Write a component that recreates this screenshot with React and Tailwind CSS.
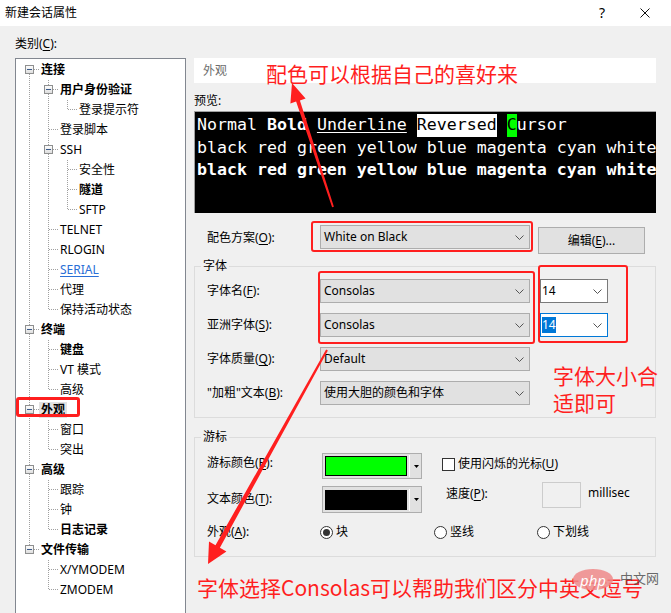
import React from "react";

// Category tree of the session properties dialog
const TREE = [
  {
    label: "连接",
    bold: true,
    children: [
      { label: "用户身份验证", bold: true, children: [{ label: "登录提示符" }] },
      { label: "登录脚本" },
      {
        label: "SSH",
        children: [{ label: "安全性" }, { label: "隧道", bold: true }, { label: "SFTP" }],
      },
      { label: "TELNET" },
      { label: "RLOGIN" },
      { label: "SERIAL", link: true },
      { label: "代理" },
      { label: "保持活动状态" },
    ],
  },
  {
    label: "终端",
    bold: true,
    children: [{ label: "键盘", bold: true }, { label: "VT 模式" }, { label: "高级" }],
  },
  { label: "外观", bold: true, selected: true, children: [{ label: "窗口" }, { label: "突出" }] },
  {
    label: "高级",
    bold: true,
    children: [{ label: "跟踪" }, { label: "钟" }, { label: "日志记录", bold: true }],
  },
  { label: "文件传输", bold: true, children: [{ label: "X/YMODEM" }, { label: "ZMODEM" }] },
];

// flatten the tree into rows, remembering which ancestor lines continue
function flatten(nodes, depth = 0, trail = [], out = []) {
  nodes.forEach((node, i) => {
    const last = i === nodes.length - 1;
    out.push({ ...node, depth, trail, last, first: depth === 0 && i === 0, key: out.length });
    if (node.children) flatten(node.children, depth + 1, [...trail, !last], out);
  });
  return out;
}

const DOT = { stroke: "#a0a0a0", strokeWidth: 1, strokeDasharray: "1 1" };

function Guide({ pass }) {
  return (
    <svg width="19" height="20" className="shrink-0">
      {pass && <line x1="9.5" y1="0" x2="9.5" y2="20" {...DOT} />}
    </svg>
  );
}

function Joint({ first, last, open }) {
  return (
    <svg width="19" height="20" className="shrink-0">
      {!first && <line x1="9.5" y1="0" x2="9.5" y2={open ? 5 : 10} {...DOT} />}
      {!last && <line x1="9.5" y1={open ? 14 : 10} x2="9.5" y2="20" {...DOT} />}
      <line x1={open ? 14 : 10} y1="9.5" x2="19" y2="9.5" {...DOT} />
      {open && (
        <g>
          <defs>
            <linearGradient id="exp" x1="0" y1="0" x2="0" y2="1">
              <stop offset="0" stopColor="#ffffff" />
              <stop offset="1" stopColor="#dcdcdc" />
            </linearGradient>
          </defs>
          <rect x="5.5" y="5.5" width="8" height="8" fill="url(#exp)" stroke="#8e8f8f" />
          <line x1="7" y1="9.5" x2="12" y2="9.5" stroke="#3b5a8a" />
        </g>
      )}
    </svg>
  );
}

function TreeRow({ row }) {
  return (
    <div className="flex h-[20px] items-center">
      {row.trail.map((pass, i) => (
        <Guide key={i} pass={pass} />
      ))}
      <Joint first={row.first} last={row.last} open={!!row.children} />
      <span
        className={`whitespace-nowrap px-[2px] leading-[16px] ${row.bold ? "font-bold" : ""} ${
          row.selected ? "bg-[#e2e2e2]" : ""
        } ${row.link ? "text-[#2a6fd6] underline underline-offset-2" : ""}`}
      >
        {row.label}
      </span>
    </div>
  );
}

function Mn({ children }) {
  return <span className="underline underline-offset-2">{children}</span>;
}

function Chevron() {
  return (
    <svg width="9" height="5" className="shrink-0">
      <path d="M0.5 0.5 L4.5 4.5 L8.5 0.5" fill="none" stroke="#555" />
    </svg>
  );
}

function Combo({ value, className = "" }) {
  return (
    <div
      className={`flex h-[24px] items-center justify-between border border-[#adadad] bg-[#e1e1e1] pl-[3px] pr-[5px] ${className}`}
    >
      <span className="whitespace-nowrap">{value}</span>
      <Chevron />
    </div>
  );
}

function SizeBox({ focused }) {
  return (
    <div
      className={`ml-[10px] flex h-[24px] w-[68px] items-center justify-between border bg-white pl-[1px] pr-[5px] ${
        focused ? "border-[#0078d7]" : "border-[#7a7a7a]"
      }`}
    >
      <span className={focused ? "bg-[#0078d7] text-white" : ""}>14</span>
      <Chevron />
    </div>
  );
}

function ColorButton({ color, className = "" }) {
  return (
    <div
      className={`flex h-[26px] w-[100px] items-center border border-[#adadad] bg-[#e1e1e1] pl-[2px] ${className}`}
    >
      <div className="h-[20px] w-[82px] border border-black" style={{ background: color }} />
      <div className="ml-[2px] h-[22px] w-[1px] bg-white" />
      <svg width="5" height="3" className="ml-[4px]">
        <path d="M0 0 H5 L2.5 3 Z" fill="#000" />
      </svg>
    </div>
  );
}

function Radio({ checked, label, className = "" }) {
  return (
    <div className={`flex items-center ${className}`}>
      <span className="flex h-[13px] w-[13px] items-center justify-center rounded-full border border-[#333] bg-white">
        {checked && <span className="h-[7px] w-[7px] rounded-full bg-[#333]" />}
      </span>
      <span className="ml-[3px]">{label}</span>
    </div>
  );
}

function Annotations() {
  const red = "#ff1f1f";
  return (
    <div className="pointer-events-none absolute inset-0">
      {/* outlines */}
      <div className="absolute left-[16px] top-[397px] h-[20px] w-[64px] rounded-[3px] border-[3px] border-[#ff1f1f]" />
      <div className="absolute left-[311px] top-[221px] h-[31px] w-[222px] rounded-[3px] border-[2px] border-[#ff1f1f]" />
      <div className="absolute left-[318px] top-[271px] h-[73px] w-[217px] rounded-[3px] border-[2px] border-[#ff1f1f]" />
      <div className="absolute left-[538px] top-[265px] h-[78px] w-[90px] rounded-[3px] border-[2px] border-[#ff1f1f]" />

      {/* arrows */}
      <svg className="absolute left-0 top-0" width="671" height="613">
        <polygon
          fill={red}
          points="333.9,206.7 299.9,100.4 305.6,98.5 292,83 290.4,103.5 296.1,101.6 332.1,207.3"
        />
        <polygon
          fill={red}
          points="327.9,350.5 219.9,547.7 226.4,551.4 208,564 209,541.6 215.5,545.3 326.1,349.5"
        />
      </svg>

      {/* notes */}
      <div className="absolute left-[266px] top-[61px] font-['Noto_Sans_CJK_SC',sans-serif] text-[21px] leading-[24px] text-[#ff1f1f]">
        配色可以根据自己的喜好来
      </div>
      <div className="absolute left-[553px] top-[362px] font-['Noto_Sans_CJK_SC',sans-serif] text-[21px] leading-[27px] text-[#ff1f1f]">
        字体大小合
        <br />
        适即可
      </div>
      <div className="absolute left-[197px] top-[575px] whitespace-nowrap font-['Noto_Sans_CJK_SC',sans-serif] text-[21px] leading-[24px] text-[#ff1f1f]">
        字体选择Consolas可以帮助我们区分中英文逗号
      </div>

      {/* site mark */}
      <div className="absolute left-[573px] top-[569px] flex items-start">
        <div className="flex h-[21px] w-[40px] items-center justify-center rounded-[50%] bg-[#ee8a8a]/85 text-[15px] italic leading-[16px] text-white">
          php
        </div>
        <span className="ml-[7px] mt-[1px] font-['Noto_Sans_CJK_SC',sans-serif] text-[13px] leading-[16px] text-[#444]/80">
          中文网
        </span>
      </div>
    </div>
  );
}

export default function App() {
  const rows = flatten(TREE);

  return (
    <div className="relative h-[613px] w-[671px] overflow-hidden bg-[#f0f0f0] font-['Noto_Sans','Noto_Sans_CJK_SC',sans-serif] text-[12px] leading-[16px] text-black">
      {/* Title bar */}
      <div className="flex h-[26px] items-center bg-white pl-[5px] pr-[21px]">
        <span>新建会话属性</span>
        <span className="ml-auto text-[14px]">?</span>
        <svg width="10" height="10" className="ml-[35px]">
          <path d="M0.5 0.5 L9.5 9.5 M9.5 0.5 L0.5 9.5" stroke="#111" />
        </svg>
      </div>

      <div className="flex">
        {/* Category tree */}
        <div className="w-[186px] shrink-0 pl-[15px] pt-[10px]">
          <div>
            类别(<Mn>C</Mn>):
          </div>
          <div className="mt-[6px] h-[570px] w-[171px] overflow-hidden border border-[#828790] bg-white pl-[4px] pt-[1px]">
            {rows.map((row) => (
              <TreeRow key={row.key} row={row} />
            ))}
          </div>
        </div>

        {/* Appearance page */}
        <div className="ml-[8px] mt-[32px] w-[462px]">
          <div className="flex h-[25px] items-center bg-white pl-[9px] text-[#6d6d6d]">外观</div>

          <div className="mt-[10px]">预览:</div>
          <div className="mt-[2px] h-[102px] overflow-hidden whitespace-pre border-l border-t border-[#a0a0a0] bg-black pl-[2px] pt-[2px] font-['DejaVu_Sans_Mono',monospace] text-[16.6px] leading-[22.5px] text-white">
            <div>
              Normal <span className="font-bold">Bold</span>{" "}
              <span className="underline underline-offset-[2px]">Underline</span>{" "}
              <span className="inline-block bg-white text-black">Reversed</span>{" "}
              <span className="inline-block bg-[#00ff00] text-black">C</span>ursor
            </div>
            <div>black red green yellow blue magenta cyan white</div>
            <div className="font-bold">black red green yellow blue magenta cyan white</div>
          </div>

          {/* Colour scheme */}
          <div className="mt-[11px] flex h-[30px] items-start pl-[13px]">
            <div className="mt-[6px] w-[113px]">
              配色方案(<Mn>O</Mn>):
            </div>
            <Combo value="White on Black" className="mt-[1px] w-[210px]" />
            <div className="ml-[8px] mt-[3px] flex h-[27px] w-[107px] items-center justify-center border border-[#adadad] bg-[#e1e1e1]">
              编辑(<Mn>E</Mn>)...
            </div>
          </div>

          {/* Font group */}
          <fieldset className="mt-[4px] border border-[#dcdcdc] pb-[12px] pt-[5px]">
            <legend className="ml-[6px] px-[2px]">字体</legend>
            <div className="flex flex-col gap-[10px] pl-[12px]">
              <div className="flex h-[24px] items-center">
                <div className="w-[113px]">
                  字体名(<Mn>F</Mn>):
                </div>
                <Combo value="Consolas" className="w-[210px]" />
                <SizeBox />
              </div>
              <div className="flex h-[24px] items-center">
                <div className="w-[113px]">
                  亚洲字体(<Mn>S</Mn>):
                </div>
                <Combo value="Consolas" className="w-[210px]" />
                <SizeBox focused />
              </div>
              <div className="flex h-[24px] items-center">
                <div className="w-[113px]">
                  字体质量(<Mn>Q</Mn>):
                </div>
                <Combo value="Default" className="w-[210px]" />
              </div>
              <div className="flex h-[24px] items-center">
                <div className="w-[113px]">
                  "加粗"文本(<Mn>B</Mn>):
                </div>
                <Combo value="使用大胆的颜色和字体" className="w-[210px]" />
              </div>
            </div>
          </fieldset>

          {/* Cursor group */}
          <fieldset className="mt-[11px] border border-[#dcdcdc] pb-[16px] pt-[8px]">
            <legend className="ml-[6px] px-[2px]">游标</legend>
            <div className="pl-[12px]">
              <div className="flex h-[27px] items-start">
                <div className="mt-[2px] w-[115px]">
                  游标颜色(<Mn>R</Mn>):
                </div>
                <ColorButton color="#00ff00" />
                <div className="ml-[20px] mt-[3px] flex items-center">
                  <span className="h-[13px] w-[13px] border border-[#333] bg-white" />
                  <span className="ml-[3px]">
                    使用闪烁的光标(<Mn>U</Mn>)
                  </span>
                </div>
              </div>
              <div className="mt-[2px] flex h-[31px] items-start">
                <div className="mt-[9px] w-[115px]">
                  文本颜色(<Mn>T</Mn>):
                </div>
                <ColorButton color="#000000" className="mt-[4px] h-[27px]" />
                <div className="ml-[24px] mt-[4px] w-[96px]">
                  速度(<Mn>P</Mn>):
                </div>
                <div className="h-[26px] w-[39px] border border-[#cccccc] bg-[#f0f0f0]" />
                <div className="ml-[7px] mt-[3px]">millisec</div>
              </div>
              <div className="mt-[11px] flex h-[16px] items-center">
                <div className="w-[113px]">
                  外观(<Mn>A</Mn>):
                </div>
                <Radio checked label="块" className="w-[114px]" />
                <Radio label="竖线" className="w-[103px]" />
                <Radio label="下划线" />
              </div>
            </div>
          </fieldset>
        </div>
      </div>

      <Annotations />
    </div>
  );
}
